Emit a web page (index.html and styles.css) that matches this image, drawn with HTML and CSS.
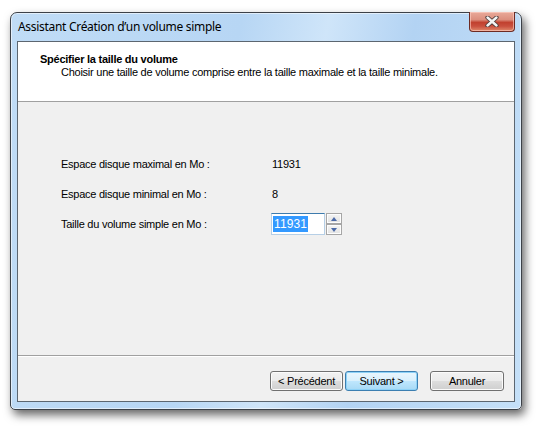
FILE: index.html
```html
<!DOCTYPE html>
<html lang="fr">
<head>
<meta charset="utf-8">
<title>Assistant Création d'un volume simple</title>
<link rel="stylesheet" href="styles.css">
</head>
<body>
<div class="desk">
  <div class="window">
    <div class="titlebar">
      <span class="title">Assistant Création d’un volume simple</span>
      <button class="close" aria-label="Fermer">
        <svg width="14" height="11" viewBox="0 0 14 11">
          <path d="M2.5 1.5 L11.5 9.5 M11.5 1.5 L2.5 9.5" stroke="#4a3a38" stroke-width="4.2" stroke-linecap="round" fill="none"/>
          <path d="M2.5 1.5 L11.5 9.5 M11.5 1.5 L2.5 9.5" stroke="#f4f4f4" stroke-width="2.4" stroke-linecap="round" fill="none"/>
        </svg>
      </button>
    </div>
    <div class="client">
      <div class="header">
        <div class="h-title">Spécifier la taille du volume</div>
        <div class="h-sub">Choisir une taille de volume comprise entre la taille maximale et la taille minimale.</div>
      </div>
      <div class="body">
        <div class="row r1"><span class="lbl">Espace disque maximal en Mo :</span><span class="val">11931</span></div>
        <div class="row r2"><span class="lbl">Espace disque minimal en Mo :</span><span class="val">8</span></div>
        <div class="row r3"><span class="lbl">Taille du volume simple en Mo :</span>
          <div class="spin">
            <div class="field"><span class="sel">11931</span></div>
            <div class="arrows">
              <div class="ab"><span class="tri up"></span></div>
              <div class="ab"><span class="tri down"></span></div>
            </div>
          </div>
        </div>
      </div>
      <div class="footer">
        <button class="btn">&lt; Précédent</button>
        <button class="btn def">Suivant &gt;</button>
        <button class="btn cancel">Annuler</button>
      </div>
    </div>
  </div>
</div>
</body>
</html>
```
FILE: styles.css
```css
html, body {
  margin: 0;
  padding: 0;
  background: #ffffff;
}
body {
  width: 539px;
  height: 427px;
  overflow: hidden;
  font-family: "Liberation Sans", Arial, sans-serif;
  font-size: 11px;
  letter-spacing: -0.25px;
  color: #000;
}
.desk {
  padding: 12px 0 0 10px;
}
.window {
  width: 512px;
  height: 398px;
  box-sizing: border-box;
  border: 1px solid #3c4148;
  border-radius: 7px 7px 5px 5px;
  background: linear-gradient(100deg, #c0dcf6 0%, #b7d6f4 40%, #cfe5f9 55%, #b3d3f3 70%, #c5e0f8 100%);
  box-shadow: 3px 5px 10px rgba(0, 0, 0, 0.6), inset 0 0 0 1px rgba(255,255,255,0.55);
  padding: 0 6px 7px 6px;
  display: flex;
  flex-direction: column;
}
.titlebar {
  height: 28px;
  flex: none;
  display: flex;
  justify-content: space-between;
  align-items: flex-start;
}
.title {
  font-family: "Noto Sans", "Open Sans", sans-serif;
  font-size: 12px;
  line-height: 15px;
  margin: 6px 0 0 1px;
  color: #000;
  letter-spacing: -0.3px;
}
.close {
  margin: -1px 0 0 0;
  width: 46px;
  height: 20px;
  box-sizing: border-box;
  border: 1px solid #6d2a22;
  border-top: 0;
  border-radius: 0 0 4px 4px;
  background: linear-gradient(#e9a999 0%, #dc8f7e 40%, #c1412f 55%, #c9503e 75%, #e08a6c 100%);
  box-shadow: inset 0 0 0 1px rgba(255, 210, 200, 0.6);
  padding: 0;
  display: flex;
  align-items: center;
  justify-content: center;
}
.client {
  flex: 1;
  border: 1px solid #5c6670;
  background: #f0f0f0;
  display: flex;
  flex-direction: column;
}
.header {
  height: 59px;
  flex: none;
  background: #ffffff;
  border-bottom: 1px solid #a0a0a0;
  box-sizing: content-box;
  padding: 0 0 0 22px;
}
.h-title {
  font-weight: bold;
  line-height: 13px;
  margin-top: 11px;
}
.h-sub {
  line-height: 13px;
  margin-left: 21px;
}
.body {
  flex: 1;
  padding: 56px 0 0 43px;
  box-sizing: border-box;
}
.row {
  display: flex;
  align-items: center;
  line-height: 13px;
}
.lbl {
  width: 211px;
  flex: none;
}
.r2 { margin-top: 17px; }
.r3 { margin-top: 12px; }
.spin {
  display: flex;
  margin-left: -1px;
}
.field {
  width: 54px;
  height: 22px;
  box-sizing: border-box;
  border: 1px solid #b6cfe6;
  border-top-color: #3d7bad;
  background: #fff;
  padding: 2px 0 0 1px;
}
.sel {
  display: inline-block;
  background: #3399ff;
  color: #fff;
  font-size: 12px;
  line-height: 16px;
  padding: 0 1px 0 1px;
  letter-spacing: 0.1px;
}
.arrows {
  margin-left: 1px;
  display: flex;
  flex-direction: column;
}
.ab {
  width: 16px;
  height: 11px;
  box-sizing: border-box;
  border: 1px solid #a6a6a6;
  box-shadow: inset 0 0 0 1px #fdfdfd;
  background: linear-gradient(#f4f4f4, #e2e2e2);
  display: flex;
  align-items: center;
  justify-content: center;
}
.tri {
  width: 0;
  height: 0;
  border-left: 3.5px solid transparent;
  border-right: 3.5px solid transparent;
}
.tri.up { border-bottom: 4px solid #4b6aa8; }
.tri.down { border-top: 4px solid #4b6aa8; }
.footer {
  height: 30px;
  flex: none;
  border-top: 1px solid #a0a0a0;
  box-shadow: inset 0 1px 0 #ffffff;
  display: flex;
  justify-content: flex-end;
  align-items: flex-start;
  padding: 15px 10px 0 0;
  box-sizing: content-box;
}
.btn {
  width: 73px;
  height: 20px;
  box-sizing: border-box;
  border: 1px solid #707070;
  border-radius: 3px;
  background: linear-gradient(#f2f2f2 0%, #ebebeb 48%, #dddddd 52%, #cfcfcf 100%);
  box-shadow: inset 0 0 0 1px #fbfbfb;
  font-family: "Liberation Sans", Arial, sans-serif;
  font-size: 11px;
  letter-spacing: -0.25px;
  color: #000;
  padding: 0;
  line-height: 16px;
}
.btn.def {
  margin-left: 2px;
  border-color: #3c7fb1;
  background: linear-gradient(#eaf6fd 0%, #d9f0fc 48%, #bee6fd 52%, #a7d9f5 100%);
  box-shadow: inset 0 0 0 1px #8ed2f7;
}
.btn.cancel {
  margin-left: 12px;
  width: 74px;
}
```
